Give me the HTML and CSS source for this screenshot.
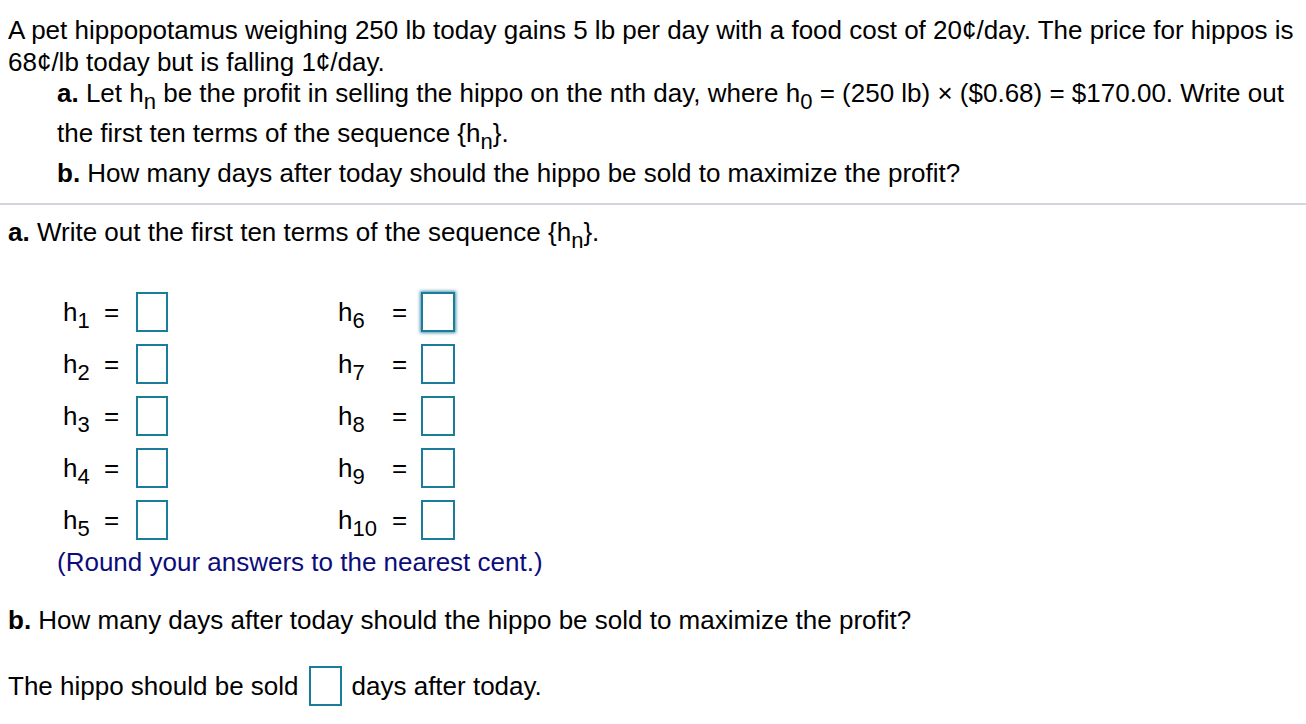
FILE: index.html
```html
<!DOCTYPE html>
<html>
<head>
<meta charset="utf-8">
<link rel="stylesheet" href="styles.css">
</head>
<body>
<div class="question">
  <p class="intro">A pet hippopotamus weighing 250 lb today gains 5 lb per day with a food cost of 20¢/day. The price for hippos is 68¢/lb today but is falling 1¢/day.</p>
  <div class="parts">
    <p class="part"><b>a.</b> Let h<sub>n</sub> be the profit in selling the hippo on the nth day, where h<sub>0</sub> = (250 lb) × ($0.68) = $170.00. Write out the first ten terms of the sequence {h<sub>n</sub>}.</p>
    <p class="part"><b>b.</b> How many days after today should the hippo be sold to maximize the profit?</p>
  </div>
</div>
<hr class="divider">
<div class="answer">
  <p class="heading"><b>a.</b> Write out the first ten terms of the sequence {h<sub>n</sub>}.</p>
  <div class="terms">
    <div class="term"><span class="lbl">h<sub>1</sub></span><span class="eq">=</span><span class="box"></span></div>
    <div class="term right"><span class="lbl">h<sub>6</sub></span><span class="eq">=</span><span class="box focus"></span></div>
    <div class="term"><span class="lbl">h<sub>2</sub></span><span class="eq">=</span><span class="box"></span></div>
    <div class="term right"><span class="lbl">h<sub>7</sub></span><span class="eq">=</span><span class="box"></span></div>
    <div class="term"><span class="lbl">h<sub>3</sub></span><span class="eq">=</span><span class="box"></span></div>
    <div class="term right"><span class="lbl">h<sub>8</sub></span><span class="eq">=</span><span class="box"></span></div>
    <div class="term"><span class="lbl">h<sub>4</sub></span><span class="eq">=</span><span class="box"></span></div>
    <div class="term right"><span class="lbl">h<sub>9</sub></span><span class="eq">=</span><span class="box"></span></div>
    <div class="term"><span class="lbl">h<sub>5</sub></span><span class="eq">=</span><span class="box"></span></div>
    <div class="term right"><span class="lbl">h<sub>10</sub></span><span class="eq">=</span><span class="box"></span></div>
  </div>
  <p class="note">(Round your answers to the nearest cent.)</p>
  <p class="heading b"><b>b.</b> How many days after today should the hippo be sold to maximize the profit?</p>
  <p class="sold"><span>The hippo should be sold</span><span class="box inline"></span><span>days after today.</span></p>
</div>
</body>
</html>
```
FILE: styles.css
```css
html, body {
  margin: 0;
  padding: 0;
  background: #ffffff;
}
body {
  font-family: "Liberation Sans", Arial, sans-serif;
  font-size: 26px;
  color: #000;
  letter-spacing: 0;
}
p {
  margin: 0;
}
b {
  font-weight: bold;
}
sub {
  font-size: 22px;
  vertical-align: -7px;
  line-height: 0;
}
.question {
  padding: 14px 8px 0 8px;
}
.intro {
  line-height: 32px;
}
.parts {
  padding-left: 49px;
  margin-top: -5px;
}
.part {
  line-height: 40px;
}
.divider {
  border: 0;
  height: 2px;
  background: #d2d5dd;
  margin: 10px 0 0 0;
}
.answer {
  padding: 7px 8px 0 8px;
}
.heading {
  line-height: 40px;
}
.terms {
  display: grid;
  grid-template-columns: 275px 200px;
  row-gap: 12px;
  margin-top: 40px;
  padding-left: 55px;
}
.term {
  display: flex;
  align-items: center;
  height: 40px;
}
.lbl {
  width: 41px;
}
.term.right .lbl {
  width: 54px;
}
.eq {
  width: 32px;
}
.term.right .eq {
  width: 29px;
}
.box {
  display: inline-block;
  box-sizing: border-box;
  width: 32px;
  height: 40px;
  border: 2px solid #1c7c9b;
  background: #fff;
}
.term.right .box {
  width: 34px;
}
.box.focus {
  box-shadow: 0 0 3px 1px rgba(28, 124, 155, 0.8);
}
.note {
  color: #0c0c7a;
  padding-left: 49px;
  line-height: 40px;
  margin-top: 2px;
}
.heading.b {
  margin-top: 18px;
}
.sold {
  margin-top: 24px;
  display: flex;
  align-items: center;
  gap: 10px;
  height: 44px;
}
.box.inline {
  width: 33px;
  height: 40px;
}
```
